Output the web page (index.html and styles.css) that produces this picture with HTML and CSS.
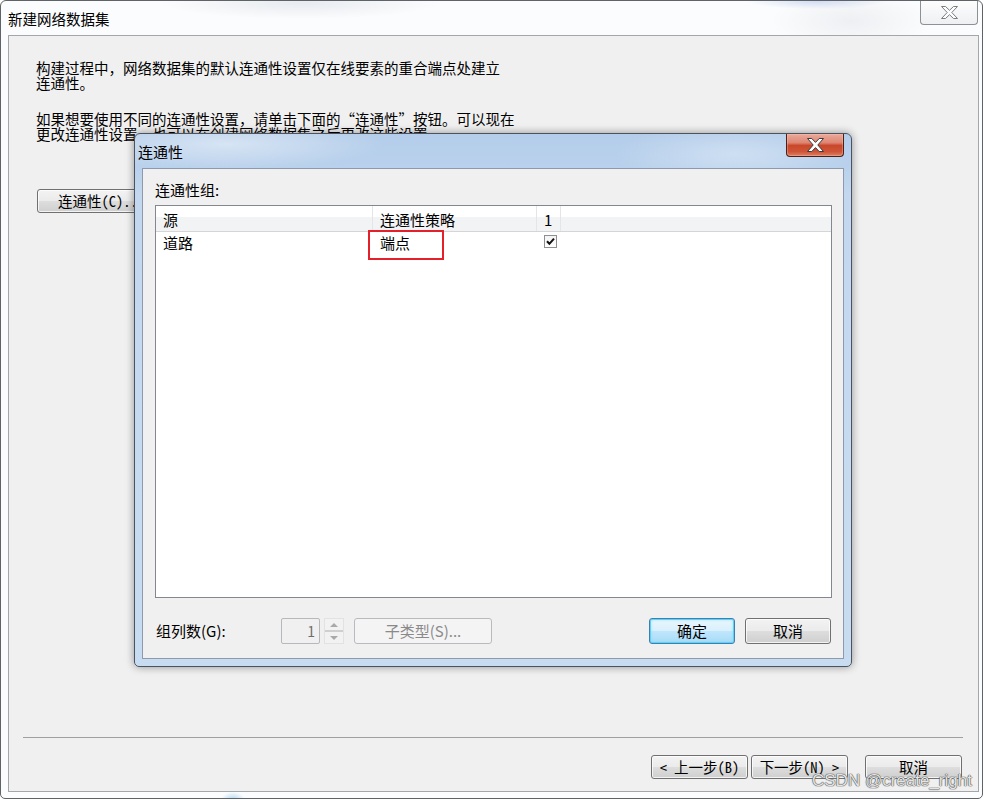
FILE: index.html
```html
<!DOCTYPE html>
<html lang="zh-CN">
<head>
<meta charset="utf-8">
<title>新建网络数据集</title>
<link rel="stylesheet" href="styles.css">
</head>
<body>
<div class="window">
  <div class="titlebar">
    <span class="title">新建网络数据集</span>
    <div class="win-close">
      <svg width="17" height="13" viewBox="0 0 17 13"><polygon points="0.5,0.5 4.5,0.5 8.5,4.3 12.5,0.5 16.5,0.5 10.8,6.5 16.5,12.5 12.5,12.5 8.5,8.7 4.5,12.5 0.5,12.5 6.2,6.5" fill="#fdfdfd" stroke="#7a7d82" stroke-width="1"/></svg>
    </div>
  </div>
  <div class="client">
    <div class="intro">
      <p>构建过程中，网络数据集的默认连通性设置仅在线要素的重合端点处建立<br>连通性。</p>
      <p>如果想要使用不同的连通性设置，请单击下面的“连通性”按钮。可以现在<br>更改连通性设置，也可以在创建网络数据集之后更改这些设置。</p>
    </div>
    <button class="btn conn-btn">连通性(C)...</button>
    <div class="separator"></div>
    <div class="wizard-buttons">
      <button class="btn wbtn">&lt; 上一步(B)</button>
      <button class="btn wbtn">下一步(N) &gt;</button>
      <button class="btn wbtn cancel">取消</button>
    </div>
  </div>
</div>

<div class="dialog">
  <div class="dtitlebar">
    <span class="dtitle">连通性</span>
    <div class="dclose">
      <svg width="17" height="14" viewBox="0 0 17 14"><polygon points="0.5,0.5 4.8,0.5 8.5,4.4 12.2,0.5 16.5,0.5 10.8,7 16.5,13.5 12.2,13.5 8.5,9.6 4.8,13.5 0.5,13.5 6.2,7" fill="#ffffff" stroke="#3b3b3b" stroke-width="1"/></svg>
    </div>
  </div>
  <div class="dbody">
    <div class="dclient">
      <div class="dlabel">连通性组:</div>
      <div class="table">
        <div class="thead">
          <div class="cell c1">源</div>
          <div class="cell c2">连通性策略</div>
          <div class="cell c3">1</div>
        </div>
        <div class="trow">
          <div class="cell c1">道路</div>
          <div class="cell c2">端点</div>
          <div class="cell c3">
            <span class="checkbox"><svg width="11" height="11" viewBox="0 0 11 11"><path d="M2 5.2 L4.4 7.8 L9 2.6" fill="none" stroke="#111" stroke-width="2"/></svg></span>
          </div>
        </div>
        <div class="highlight"></div>
      </div>
      <div class="dfooter">
        <span class="flabel">组列数(G):</span>
        <div class="spin-input">1</div>
        <div class="spin">
          <div class="spin-part"><span class="arrow-up"></span></div>
          <div class="spin-part"><span class="arrow-down"></span></div>
        </div>
        <button class="btn disabled subtype">子类型(S)...</button>
        <button class="btn default ok">确定</button>
        <button class="btn dcancel">取消</button>
      </div>
    </div>
  </div>
</div>

<div class="watermark">CSDN @create_right</div>
</body>
</html>
```

FILE: styles.css
```css
* {
  box-sizing: border-box;
}

html,
body {
  margin: 0;
  padding: 0;
}

body {
  width: 986px;
  height: 800px;
  position: relative;
  overflow: hidden;
  background: #ffffff;
  color: #000000;
  font-family: "Noto Sans CJK SC", "Noto Sans", sans-serif;
}

/* ---------- main wizard window ---------- */
.window {
  width: 983px;
  height: 799px;
  border: 1px solid #5f6266;
  border-radius: 6px 6px 5px 5px;
  padding: 0 3px 6px 7px;
  display: flex;
  flex-direction: column;
  background:
    radial-gradient(ellipse 140px 16px at 300px 2px, rgba(195, 203, 215, 0.35), transparent),
    radial-gradient(ellipse 70px 8px at 815px 0, rgba(160, 185, 235, 0.45), transparent),
    radial-gradient(ellipse 80px 30px at 850px 20px, rgba(220, 224, 230, 0.45), transparent),
    radial-gradient(ellipse 12px 8px at 232px 799px, rgba(120, 190, 240, 0.6), transparent),
    #fbfcfd;
}

.titlebar {
  flex: none;
  height: 34px;
  display: flex;
  align-items: center;
}

.title {
  font-size: 14.5px;
  line-height: 16px;
  margin-top: 1px;
}

.win-close {
  align-self: flex-start;
  margin-left: auto;
  margin-right: 1px;
  width: 58px;
  height: 24px;
  border: 1px solid #8d9095;
  border-top: none;
  border-radius: 0 0 4px 4px;
  background: linear-gradient(#fdfdfd, #eef0f2);
  display: flex;
  align-items: center;
  justify-content: center;
}

.win-close svg {
  display: block;
}

.client {
  flex: 1;
  border: 1px solid #a4a6a9;
  background: #f0f0f0;
  padding: 24px 15px 12px 14px;
  display: flex;
  flex-direction: column;
  font-family: "Noto Sans Mono CJK SC", "Noto Sans CJK SC", monospace;
  font-size: 14.5px;
}

.intro {
  padding-left: 13px;
  white-space: nowrap;
}

.intro p {
  margin: 0 0 21px;
  line-height: 15px;
}

.intro p:last-child {
  margin-bottom: 0;
}

/* ---------- buttons ---------- */
.btn {
  height: 24px;
  padding: 0;
  border: 1px solid #707070;
  border-radius: 3px;
  background: linear-gradient(#f3f3f3 0%, #ebebeb 48%, #dddddd 52%, #cfcfcf 100%);
  box-shadow: inset 0 0 0 1px rgba(255, 255, 255, 0.75);
  font: inherit;
  color: #000000;
  line-height: 20px;
  white-space: nowrap;
  overflow: hidden;
}

.conn-btn {
  align-self: flex-start;
  margin: 48px 0 0 14px;
  width: 129px;
}

.separator {
  margin-top: auto;
  height: 1px;
  background: #a0a0a0;
}

.wizard-buttons {
  margin-top: 17px;
  display: flex;
  justify-content: flex-end;
  padding-right: 1px;
}

.wbtn {
  width: 97px;
}

.wbtn + .wbtn {
  margin-left: 3px;
}

.wbtn.cancel {
  margin-left: 17px;
}

/* ---------- connectivity dialog ---------- */
.dialog {
  position: absolute;
  left: 134px;
  top: 133px;
  width: 718px;
  height: 534px;
  border: 1px solid #4b5361;
  border-radius: 6px 6px 5px 5px;
  display: flex;
  flex-direction: column;
  background:
    radial-gradient(ellipse 160px 26px at 90px 10px, rgba(255, 255, 255, 0.45), transparent),
    radial-gradient(ellipse 120px 30px at 600px 20px, rgba(225, 236, 248, 0.55), transparent),
    linear-gradient(180deg, #b4cdea 0px, #b9d1ec 34px, #c3d8ef 60px, #c8dcf1 100%);
  box-shadow: 0 0 9px rgba(0, 0, 0, 0.4);
}

.dtitlebar {
  flex: none;
  height: 34px;
  display: flex;
  align-items: center;
  padding-left: 3px;
}

.dtitle {
  font-size: 15px;
  line-height: 16px;
  margin-top: 1px;
}

.dclose {
  align-self: flex-start;
  margin-left: auto;
  margin-right: 7px;
  width: 58px;
  height: 23px;
  border: 1px solid #4a2019;
  border-top: none;
  border-radius: 0 0 4px 4px;
  background: linear-gradient(#eaaa9c 0%, #de8572 40%, #c9472b 52%, #cf5437 80%, #dc8163 100%);
  box-shadow: inset 0 0 0 1px rgba(255, 200, 190, 0.35);
  display: flex;
  align-items: center;
  justify-content: center;
}

.dclose svg {
  display: block;
}

.dbody {
  flex: 1;
  padding: 0 7px 7px 7px;
  display: flex;
}

.dclient {
  flex: 1;
  border: 1px solid #8e9aab;
  background: #f0f0f0;
  padding: 13px 11px 14px 12px;
  display: flex;
  flex-direction: column;
  font-size: 15px;
}

.dlabel {
  line-height: 16px;
}

.table {
  position: relative;
  margin-top: 7px;
  height: 393px;
  border: 1px solid #828790;
  background: #ffffff;
}

.thead {
  display: flex;
  height: 26px;
  border-bottom: 1px solid #d5d5d5;
  background: linear-gradient(#ffffff 0%, #ffffff 42%, #f2f3f5 46%, #f2f3f5 100%);
}

.trow {
  display: flex;
  height: 23px;
}

.cell {
  padding-left: 7px;
  white-space: nowrap;
}

.thead .cell {
  padding-top: 3px;
  line-height: 22px;
  border-right: 1px solid #e3e5e8;
}

.trow .cell {
  line-height: 22px;
}

.c1 {
  width: 217px;
}

.c2 {
  width: 164px;
}

.c3 {
  width: 24px;
}

.checkbox {
  display: block;
  margin-top: 3px;
  width: 13px;
  height: 13px;
  border: 1px solid #8f8f8f;
  background: linear-gradient(#f4f4f4, #ffffff);
}

.checkbox svg {
  display: block;
}

.highlight {
  position: absolute;
  left: 212px;
  top: 24px;
  width: 76px;
  height: 30px;
  border: 2px solid #e4202b;
}

.dfooter {
  margin-top: 20px;
  height: 26px;
  display: flex;
  align-items: center;
  padding-left: 1px;
  padding-right: 1px;
}

.flabel {
  width: 125px;
  line-height: 16px;
}

.spin-input {
  width: 39px;
  height: 26px;
  border: 1px solid #b6b8bb;
  border-radius: 2px;
  background: #f0f0f0;
  text-align: right;
  padding-right: 4px;
  line-height: 24px;
  font-size: 14px;
  color: #6d6d6d;
}

.spin {
  margin-left: 4px;
  width: 20px;
  height: 26px;
  display: flex;
  flex-direction: column;
  border: 1px solid #e2e2e2;
  background: #ffffff;
}

.spin-part {
  flex: 1;
  display: flex;
  align-items: center;
  justify-content: center;
  background: #f2f2f2;
}

.spin-part + .spin-part {
  border-top: 2px solid #cfcfcf;
}

.arrow-up {
  width: 0;
  height: 0;
  border-left: 4px solid transparent;
  border-right: 4px solid transparent;
  border-bottom: 4px solid #a9a9a9;
}

.arrow-down {
  width: 0;
  height: 0;
  border-left: 4px solid transparent;
  border-right: 4px solid transparent;
  border-top: 4px solid #a9a9a9;
}

.btn.disabled {
  border-color: #b8babd;
  background: #f4f4f4;
  box-shadow: none;
  color: #8a8a8a;
}

.subtype {
  margin-left: 10px;
  width: 138px;
  height: 26px;
  line-height: 22px;
}

.ok,
.dcancel {
  width: 86px;
  height: 26px;
  line-height: 22px;
}

.ok {
  margin-left: auto;
}

.btn.default {
  border-color: #3c7fb1;
  background: linear-gradient(#eaf6fd 0%, #d9f0fc 48%, #bee6fd 52%, #a9dbf6 100%);
  box-shadow: inset 0 0 0 1px #5fd0f6, inset 0 0 3px 1px rgba(120, 220, 250, 0.6);
}

.dcancel {
  margin-left: 10px;
}

/* ---------- watermark ---------- */
.watermark {
  position: absolute;
  left: 812px;
  top: 771px;
  font-family: "Liberation Sans", Arial, sans-serif;
  font-size: 17px;
  line-height: 20px;
  color: #e4e4e4;
  text-shadow: 0 0 1px #505050, 0 0 1px #505050, 0 0 1px #505050;
  white-space: nowrap;
}
```
